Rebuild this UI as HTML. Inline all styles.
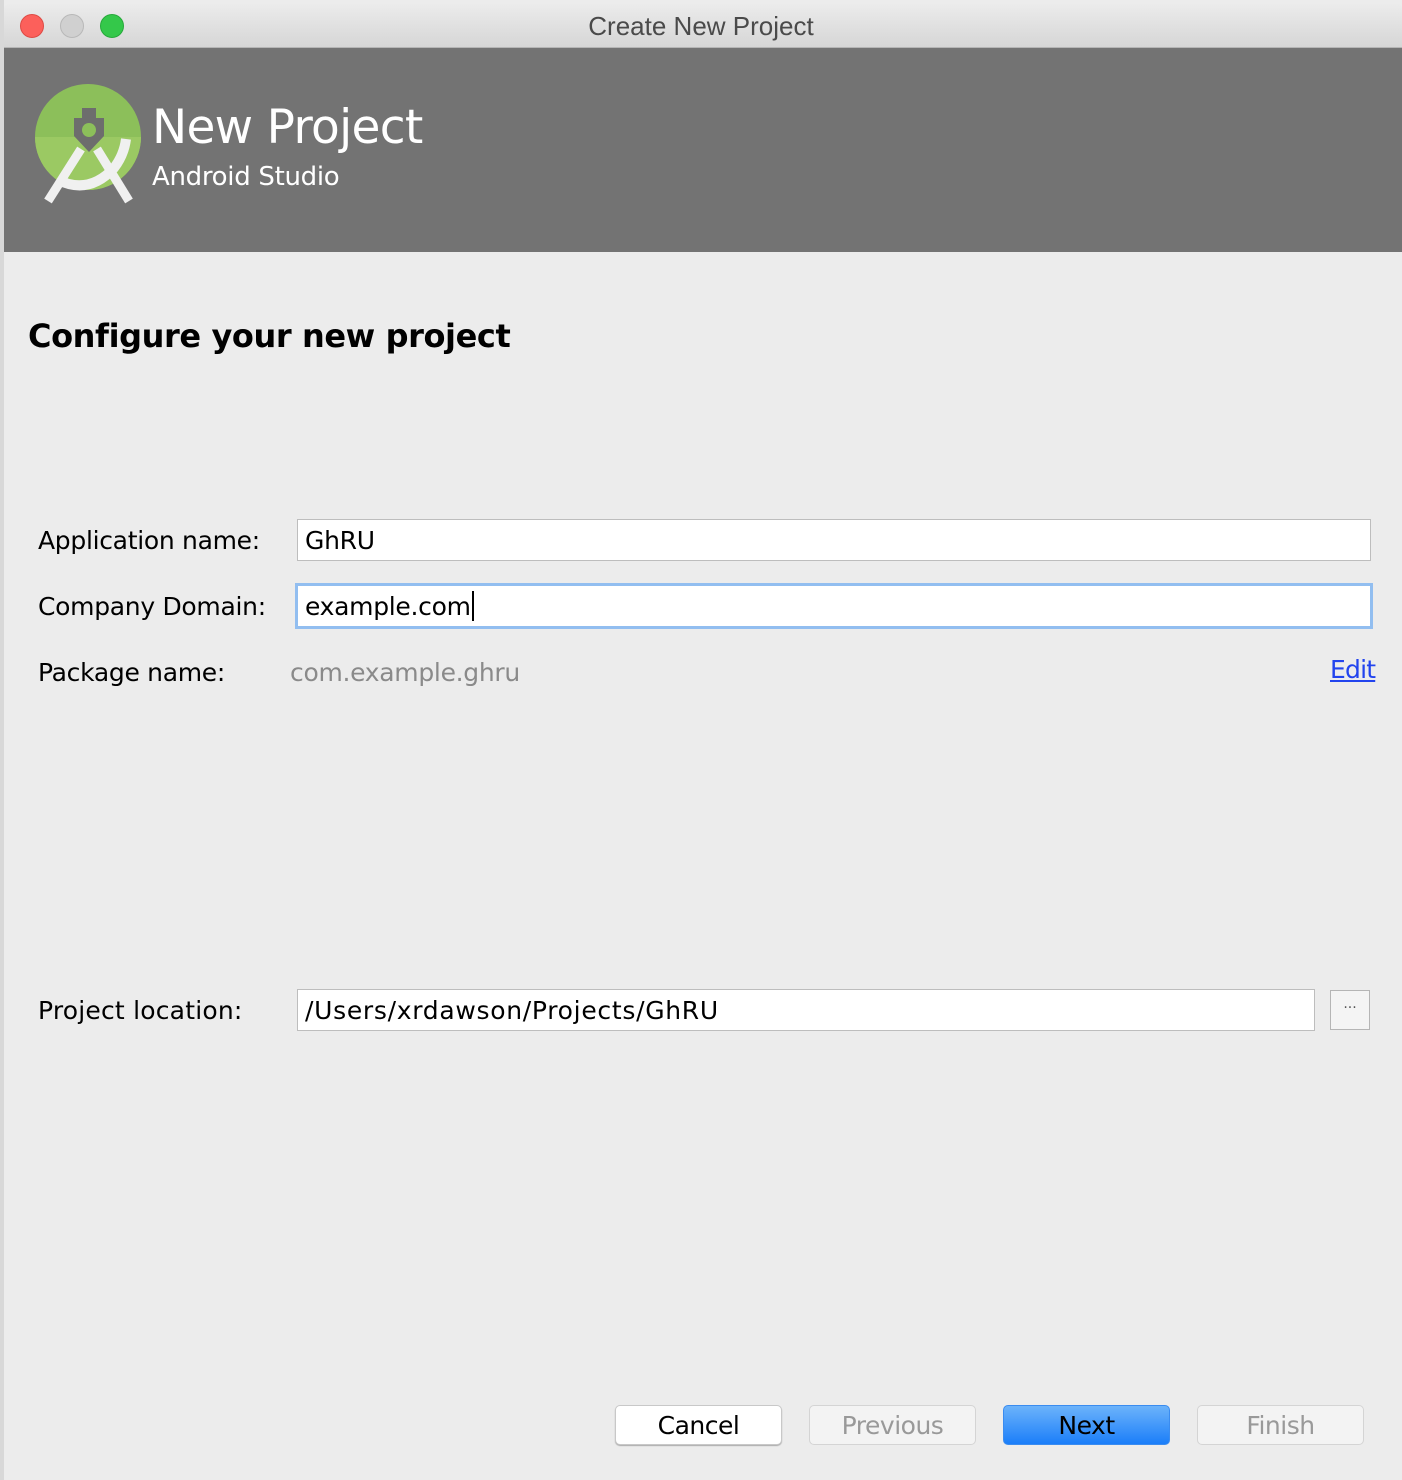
<!DOCTYPE html>
<html><head><meta charset="utf-8"><style>
*{margin:0;padding:0;box-sizing:border-box}
body{width:1402px;height:1480px;overflow:hidden;background:#ececec;font-family:"DejaVu Sans","Liberation Sans",sans-serif;position:relative}
.a{position:absolute}
.lbl{font-size:25px;color:#000;letter-spacing:-0.3px}
.fld{background:#fff;border:1px solid #bdbdbd;font-size:25px;padding-left:7px;display:flex;align-items:center;letter-spacing:-0.3px}
.btn{position:absolute;top:1405px;height:40px;width:167px;border-radius:5px;font-size:25px;display:flex;align-items:center;justify-content:center;border:1px solid #c8c8c8;letter-spacing:-0.5px}
</style></head><body>
<div class="a" style="left:0;top:0;width:4px;height:1480px;background:#d8d8d8"></div>
<div class="a" style="left:4px;top:3px;width:1398px;height:45px;background:linear-gradient(#ececec,#d6d6d6);border-bottom:1px solid #b5b5b5;border-radius:6px 6px 0 0"></div>
<div class="a" style="left:20px;top:14px;width:24px;height:24px;border-radius:50%;background:#fc605b;border:1px solid #de4a44"></div>
<div class="a" style="left:60px;top:14px;width:24px;height:24px;border-radius:50%;background:#d0d0d0;border:1px solid #b8b8b8"></div>
<div class="a" style="left:100px;top:14px;width:24px;height:24px;border-radius:50%;background:#34c84a;border:1px solid #26a93a"></div>
<div class="a" style="left:0;top:11px;width:1402px;text-align:center;font-family:'Liberation Sans',sans-serif;font-size:26px;color:#4a4a4a">Create New Project</div>
<div class="a" style="left:4px;top:48px;width:1398px;height:204px;background:#737373"></div>
<svg class="a" style="left:34px;top:83px" width="110" height="122" viewBox="0 0 110 122">
<circle cx="54" cy="54" r="53" fill="#8cbf5a"/>
<path d="M1 54 A53 53 0 0 0 107 54Z" fill="#9bc963"/>
<rect x="48" y="25" width="14" height="14" fill="#6d6d6d"/>
<path d="M40 35 h30 v18 l-15 16 l-15 -16z" fill="#6d6d6d"/>
<circle cx="55" cy="47" r="7" fill="#8cbf5a"/>
<path d="M24 97 Q55 112 80 85 Q90 72 92 56" fill="none" stroke="#f0f0f0" stroke-width="10"/>
<path d="M47 66 L14 118" stroke="#f0f0f0" stroke-width="9" stroke-linecap="butt"/>
<path d="M63 66 L95 118" stroke="#f0f0f0" stroke-width="9" stroke-linecap="butt"/>
</svg>
<div class="a" style="left:152px;top:100px;font-size:47px;color:#fff;letter-spacing:-0.7px">New Project</div>
<div class="a" style="left:152px;top:162px;font-size:26px;color:#fff;letter-spacing:-0.3px">Android Studio</div>
<div class="a" style="left:28px;top:317px;font-size:32px;font-weight:bold;color:#000;letter-spacing:-0.4px">Configure your new project</div>
<div class="a lbl" style="left:38px;top:526px">Application name:</div>
<div class="a fld" style="left:297px;top:519px;width:1074px;height:42px">GhRU</div>
<div class="a lbl" style="left:38px;top:592px">Company Domain:</div>
<div class="a fld" style="left:295px;top:583px;width:1078px;height:46px;border:3px solid #92bef0;padding-left:7px">example.com<span style="display:inline-block;width:2px;height:30px;background:#000;margin-left:1px"></span></div>
<div class="a lbl" style="left:38px;top:658px">Package name:</div>
<div class="a lbl" style="left:290px;top:658px;color:#8a8a8a">com.example.ghru</div>
<div class="a lbl" style="left:1330px;top:655px;color:#2244ee;text-decoration:underline;letter-spacing:-0.8px">Edit</div>
<div class="a lbl" style="left:38px;top:996px;letter-spacing:0.2px">Project location:</div>
<div class="a fld" style="left:297px;top:989px;width:1018px;height:42px;letter-spacing:0.7px">/Users/xrdawson/Projects/GhRU</div>
<div class="a" style="left:1330px;top:990px;width:40px;height:40px;border:1px solid #b5b5b5;background:#f4f4f4;font-size:14px;color:#555;text-align:center;line-height:34px">···</div>
<div class="btn" style="left:615px;background:#fff;color:#000;box-shadow:0 1px 1px #aaa">Cancel</div>
<div class="btn" style="left:809px;background:#f3f3f3;color:#999;border-color:#d4d4d4">Previous</div>
<div class="btn" style="left:1003px;background:linear-gradient(#6cb3fa,#1b7ef9);color:#000;border-color:#3a8cf0">Next</div>
<div class="btn" style="left:1197px;background:#f3f3f3;color:#999;border-color:#d4d4d4">Finish</div>
</body></html>
